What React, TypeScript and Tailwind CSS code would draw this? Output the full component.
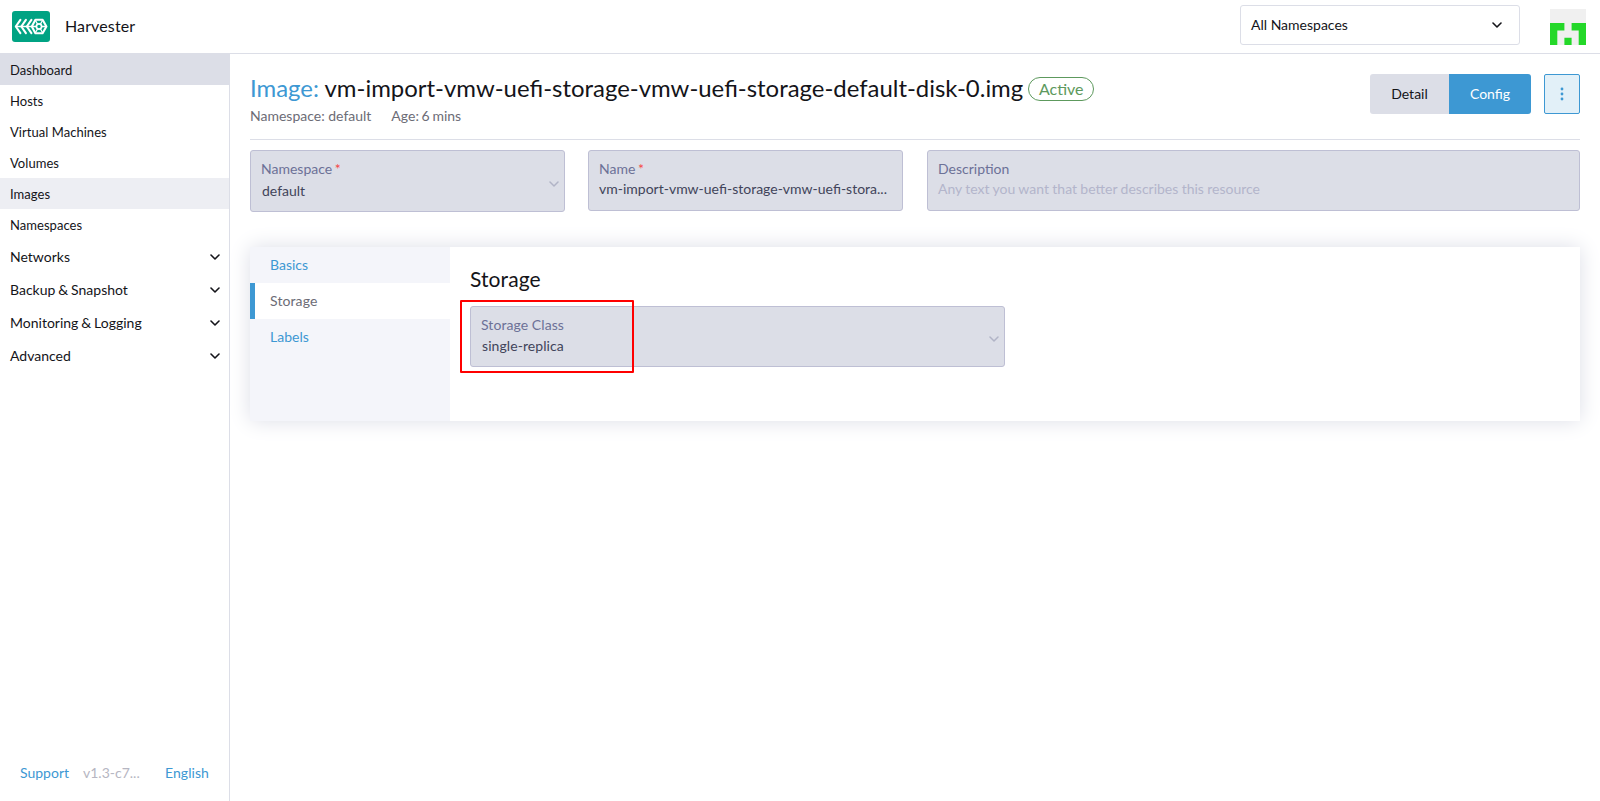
import React from "react";

function Chevron({ className = "", w = 1.6 }: { className?: string; w?: number }) {
  return (
    <svg className={className} width="10" height="6" viewBox="0 0 10 6" fill="none" stroke="currentColor" strokeWidth={w} strokeLinecap="round" strokeLinejoin="round">
      <path d="M1 1l4 4 4-4" />
    </svg>
  );
}

function Logo() {
  return (
    <svg width="38" height="31" viewBox="0 0 38 31" fill="none" stroke="#fff" strokeWidth="2.1" strokeLinejoin="round" strokeLinecap="round">
      <rect width="38" height="31" rx="3" fill="#00a383" stroke="none" />
      <path d="M8.4 8.8L3.8 15.5L8.4 22.2M13.9 8.8L9.3 15.5L13.9 22.2M19.4 8.8L14.8 15.5L19.4 22.2" />
      <path strokeWidth="1.3" d="M3.8 15.5H20" />
      <path d="M23.4 8.8H30.6L34.4 15.5L30.6 22.2H23.4L19.8 15.5Z" />
      <circle cx="27" cy="15.5" r="2.6" strokeWidth="1.7" />
      <path strokeWidth="1.3" d="M23.8 10l1.7 3M30.2 10l-1.7 3M23.8 21l1.7-3M30.2 21l-1.7-3M20 15.5h4M30 15.5h4" />
    </svg>
  );
}

function Avatar() {
  return (
    <svg width="36" height="36" viewBox="0 0 36 36">
      <rect width="36" height="36" fill="#f0f0f0" />
      <path fill="#24d829" d="M0 14H14.4V21.5H7.3V36H0ZM21.6 14H36V36H28.7V21.5H21.6ZM14.4 28.8H21.6V36H14.4Z" />
    </svg>
  );
}

const items = ["Dashboard", "Hosts", "Virtual Machines", "Volumes", "Images", "Namespaces"];
const groups = ["Networks", "Backup & Snapshot", "Monitoring & Logging", "Advanced"];

function Sidebar() {
  return (
    <nav className="flex w-[230px] shrink-0 flex-col border-r border-[#dcdee7]">
      {items.map((t) => (
        <div key={t} className={`flex h-[31px] items-center pt-[2px] pl-[10px] text-[13px] tracking-[0.04px] ${t === "Dashboard" ? "bg-[#dcdee7]" : t === "Images" ? "bg-[#edeef3]" : ""}`}>
          {t}
        </div>
      ))}
      {groups.map((t) => (
        <div key={t} className="flex h-[33px] items-center justify-between pr-[9px] pl-[10px] [word-spacing:-0.7px]">
          {t}
          <Chevron />
        </div>
      ))}
      <div className="mt-auto mb-[18px] flex h-[21px] items-center px-5 text-[#3d98d3]">
        <span>Support</span>
        <span className="ml-[14px] text-[#b6b6c2]">v1.3-c7...</span>
        <span className="ml-auto tracking-[0.07px]">English</span>
      </div>
    </nav>
  );
}

function Field({ label, required, value, className = "", select, placeholder, valueClass = "" }: { label: string; required?: boolean; value: string; className?: string; select?: boolean; placeholder?: boolean; valueClass?: string }) {
  return (
    <div className={`flex items-center rounded-[3px] border border-[#bebfd4] bg-[#dcdee7] pr-[5px] pl-[10px] ${className}`}>
      <div className="min-w-0 flex-1 self-start pt-[8px]">
        <div className="leading-[20px] text-[#6c7197]">
          {label}
          {required && <span className="text-[#f64747] [word-spacing:-1px]"> *</span>}
        </div>
        <div className={`leading-[20px] ${valueClass} ${placeholder ? "text-[#b3b5cb] [word-spacing:-0.25px]" : "text-[#41445a]"}`}>{value}</div>
      </div>
      {select && <Chevron className="mt-[5px] text-[#b1b4c6]" w={1.5} />}
    </div>
  );
}

export default function App() {
  return (
    <div className="flex h-[801px] w-[1600px] flex-col overflow-hidden bg-white font-['Lato',sans-serif] text-[14px] text-[#141419]">
      <header className="flex h-[54px] shrink-0 border-b border-[#dcdee7] pr-[14px] pl-[12px]">
        <div className="pt-[11px]">
          <Logo />
        </div>
        <div className="ml-[15px] pt-[14px] text-[16px] leading-[24px] tracking-[0.12px]">Harvester</div>
        <div className="mt-[5px] ml-auto flex h-10 w-[280px] items-center justify-between rounded-[3px] border border-[#dcdee7] pr-[17px] pl-[10px]">
          <span className="pb-[2px]">All Namespaces</span>
          <Chevron />
        </div>
        <div className="ml-[30px] pt-[9px]">
          <Avatar />
        </div>
      </header>
      <div className="flex min-h-0 flex-1">
        <Sidebar />
        <main className="flex flex-1 flex-col px-5 pt-5">
          <div className="flex h-[66px] justify-between border-b border-[#dcdee7]">
            <div>
              <div className="flex h-[30px] items-center text-[23.93px] leading-[30px]">
                <h1 className="-mt-[2px] whitespace-pre">
                  <span className="text-[#3d98d3]">Image: </span>
                  vm-import-vmw-uefi-storage-vmw-uefi-storage-default-disk-0.img
                </h1>
                <span className="ml-[5px] flex h-6 w-[66px] items-center justify-center rounded-full border border-[#5d995d] text-[16px] text-[#5d995d]">Active</span>
              </div>
              <div className="flex gap-5 pt-[2px] leading-[20px] text-[#6c6c76]">
                <span>Namespace: default</span>
                <span className="[word-spacing:-0.9px]">Age: 6 mins</span>
              </div>
            </div>
            <div className="flex h-10">
              <button className="w-[79px] rounded-l-[3px] bg-[#dcdee7] pb-[2px]">Detail</button>
              <button className="w-[82px] rounded-r-[3px] bg-[#3d98d3] pb-[2px] text-white">Config</button>
              <button className="ml-[13px] flex w-9 items-center justify-center rounded-[2px] border border-[#3d98d3] bg-[#e2f0f8]">
                <svg width="4" height="14" viewBox="0 0 4 14" fill="#3d98d3">
                  <circle cx="2" cy="2" r="1.4" />
                  <circle cx="2" cy="7" r="1.4" />
                  <circle cx="2" cy="12" r="1.4" />
                </svg>
              </button>
            </div>
          </div>
          <div className="flex items-start pt-[10px]">
            <Field label="Namespace" required value="default" select valueClass="pt-[2px] pl-px" className="h-[62px] w-[315px]" />
            <Field label="Name" required value="vm-import-vmw-uefi-storage-vmw-uefi-stora..." className="ml-[23px] h-[61px] w-[315px]" />
            <Field label="Description" value="Any text you want that better describes this resource" placeholder className="ml-6 h-[61px] flex-1" />
          </div>
          <section className="mt-[35px] flex h-[174px] shadow-[0_0_20px_#dcdee7]">
            <div className="w-[200px] bg-[#f4f5fa] text-[#3d98d3]">
              <div className="flex h-9 items-center pb-[2px] pl-5">Basics</div>
              <div className="flex h-9 items-center border-l-5 border-[#3d98d3] bg-white pb-[2px] pl-[15px] tracking-[0.1px] text-[#6c6c76]">Storage</div>
              <div className="flex h-9 items-center pb-[2px] pl-5">Labels</div>
            </div>
            <div className="flex-1 bg-white pt-[19px] pl-5">
              <h2 className="text-[21px] leading-[25px] tracking-[0.1px]">Storage</h2>
              <div className="relative mt-[15px]">
                <Field label="Storage Class" value="single-replica" select valueClass="pt-px pl-px" className="h-[61px] w-[535px] tracking-[0.07px]" />
                <div className="absolute top-[-6px] left-[-10px] h-[73px] w-[174px] rounded-[1px] border-2 border-[#ff0000]" />
              </div>
            </div>
          </section>
        </main>
      </div>
    </div>
  );
}
